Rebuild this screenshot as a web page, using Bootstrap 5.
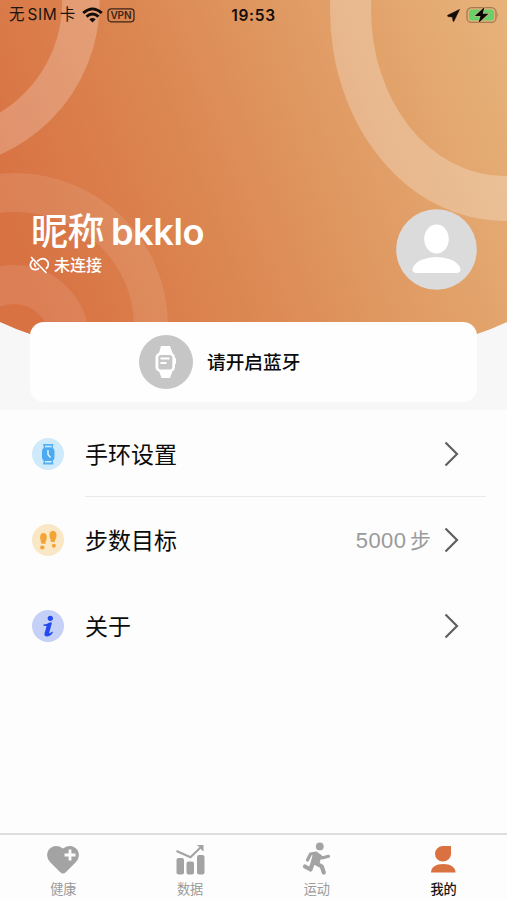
<!DOCTYPE html>
<html lang="zh-CN">
<head>
<meta charset="utf-8">
<meta name="viewport" content="width=device-width, initial-scale=1">
<title>我的</title>
<link href="https://cdn.jsdelivr.net/npm/bootstrap@5.3.0/dist/css/bootstrap.min.css" rel="stylesheet">
<style>
body{font-family:Inter,"Noto Sans CJK SC",sans-serif;background:#fdfdfd;color:#0b0b0b;line-height:1}
svg{display:block;flex:none}
.app{height:900px;overflow:hidden}
.hero{height:410px;background:#f7f7f7}
.hero-art{z-index:0}
.hero-body{z-index:1}
.status{height:30px;padding:0 8px 0 9px;display:grid;grid-template-columns:1fr auto 1fr;font-size:15px;color:#20140d}
.sim{font-size:15.5px;letter-spacing:.6px;word-spacing:-2.6px;white-space:nowrap;line-height:22px}
.clock{font-size:15.5px;font-weight:600;letter-spacing:.7px;color:#140c08;margin-right:1px;padding-top:1px}
.profile{margin-top:179px;padding:0 30px 0 31px;height:81px}
.nick{font-size:36.2px;font-weight:600;line-height:46px;letter-spacing:-.4px;word-spacing:-2px;white-space:nowrap}
.nick-zh{font-weight:500;font-size:37px}
.state{font-size:16px;font-weight:500;line-height:22px;margin-top:-1px}
.device{height:80px;margin:32px 30px 0;border-radius:14px;padding-left:109px;gap:14px;background:#fefefe}
.device-text{font-size:18.7px;font-weight:500;line-height:26px;padding-top:1px}
.item{height:86px;padding:2px 48px 0 32px;gap:21px}
.item-title{font-size:23px;line-height:32px;padding-top:1px}
.rule{height:1px;background:#e9e9e9;margin:0 21px -1px 85px}
.goal{font-size:21px;color:#9a9a9a;margin-right:-8px;line-height:30px;word-spacing:-2.5px;padding-top:1px}
.goal-num{font-family:"Liberation Sans",sans-serif;font-size:22px;letter-spacing:.5px}
.tabs{height:67px;border-top:2px solid #dedede;background:#fdfdfd}
.tab{font-size:13.2px;color:#9b9b9b;padding-top:7px}
.tab-label{line-height:19px;margin-top:4px}
.tab.active{color:#151515;font-weight:500}
</style>
<script src="https://cdn.jsdelivr.net/npm/bootstrap@5.3.0/dist/js/bootstrap.bundle.min.js"></script>
</head>
<body>
<div class="app d-flex flex-column">
  <header class="hero position-relative">
    <svg class="hero-art position-absolute top-0 start-0" width="507" height="410" viewBox="0 0 507 410">
      <defs>
        <linearGradient id="sun" gradientUnits="userSpaceOnUse" x1="20" y1="250" x2="520" y2="60">
          <stop offset="0" stop-color="#d87243"/><stop offset=".35" stop-color="#dc8752"/><stop offset=".7" stop-color="#e19f67"/><stop offset="1" stop-color="#e6b27a"/>
        </linearGradient>
        <clipPath id="dome"><path d="M0 0H507V322Q492 329 477 334Q254 410 30 334Q15 329 0 322Z"/></clipPath>
      </defs>
      <g clip-path="url(#dome)">
        <rect width="507" height="410" fill="url(#sun)"/>
        <circle cx="-68" cy="1.5" r="149" stroke-width="37.5" stroke="#fff" stroke-opacity=".22" fill="none"/>
        <path fill="#fff" fill-opacity=".25" fill-rule="evenodd" d="M330 10a174 211 0 0 0 348 0a174 211 0 0 0-348 0ZM371 10a133 166 0 0 0 266 0a133 166 0 0 0-266 0Z"/>
        <path fill="#fff" fill-opacity=".1" fill-rule="evenodd" d="M-138 326a153 153 0 0 1 306 0a153 153 0 0 1-306 0ZM-104 326a119 114 0 0 1 238 0a119 114 0 0 1-238 0Z"/>
        <circle cx="14" cy="340" r="55.500" stroke="#ecaa98" stroke-width="39" stroke-opacity=".24" fill="none"/>
      </g>
    </svg>
    <div class="hero-body position-relative">
      <div class="status align-items-center">
        <div class="d-flex align-items-center">
          <span class="sim">无 SIM 卡</span>
          <svg style="margin-left:6px" width="21" height="16" viewBox="0 0 21 16" fill="none" stroke="#140c08" stroke-width="2.800"><path d="M1.200 6Q10.500-2.200 19.800 6M4.500 9.600Q10.500 4.400 16.500 9.600"/><path d="M7.300 12.200Q10.500 9.600 13.700 12.200L10.500 15.500Z" fill="#140c08" stroke="none"/></svg>
          <svg class="ms-1" width="28" height="15" viewBox="0 0 28 15"><rect x="1" y=".8" width="26" height="13" rx="3.200" fill="none" stroke="#3b2518" stroke-width="1.300"/><text x="14" y="11" text-anchor="middle" font-size="10" font-weight="600" textLength="21" fill="#3b2518" font-family="Inter,sans-serif">VPN</text></svg>
        </div>
        <span class="clock">19:53</span>
        <div class="d-flex align-items-center justify-content-end">
          <svg width="13" height="13" viewBox="0 0 13 13"><path d="M12.500.5L.8 6.200Q0 7 1 7.500L5.500 8L6 12Q6.300 13 7 12Z" fill="#140c08" stroke="#140c08" stroke-width=".6"/></svg>
          <svg style="margin-left:6px" width="33" height="18" viewBox="0 0 33 18"><rect x="1" y="1.600" width="29" height="14.800" rx="4.500" fill="none" stroke="#a67b50" stroke-width="1.300"/><rect x="3" y="3.600" width="25" height="10.800" rx="2.800" fill="#69cf6b"/><path d="M31.300 6.500Q33 9 31.300 11.500Z" fill="#a67b50"/><path d="M18.500 1L8.800 10H14.500L12.500 17L22.500 7.800H16.700Z" fill="#080808" stroke="#e2ae76" stroke-width="1.200" paint-order="stroke"/></svg>
        </div>
      </div>
      <div class="profile d-flex justify-content-between text-white">
        <div>
          <div class="nick"><span class="nick-zh">昵称</span> bkklo</div>
          <div class="state d-flex align-items-center">
            <svg style="margin:0 4px 0 -2px" width="21" height="18" viewBox="0 0 21 18" fill="none" stroke="#fff" stroke-width="1.700" stroke-linecap="round"><path d="M2.500 1.500L17 16.500M3.500 4.300Q-.5 8.500 2.800 12.500Q6.500 15 9.500 12.500M8.800 5L11 3.400Q15 1.500 18.200 4.800Q20.800 9 17.500 12.300M5.500 7.500Q5.500 9.200 6.500 10.500"/></svg>未连接
          </div>
        </div>
        <svg width="81" height="81" viewBox="0 0 81 81"><circle cx="40.500" cy="40.500" r="40.300" fill="#dbdbdb"/><ellipse cx="40.500" cy="30" rx="12.300" ry="14.400" fill="#fff"/><path d="M16.500 60.500Q17 55 25 51Q40.500 45 56 51Q64 55 64.500 60.500Q64.500 64 60 64H21Q16.500 64 16.500 60.500Z" fill="#fff"/></svg>
      </div>
      <div class="device d-flex align-items-center">
        <svg width="54" height="54" viewBox="0 0 54 54"><circle cx="27" cy="27" r="27" fill="#c6c6c6"/><path d="M22 11H31L33.500 18V36L31 43H22.500L20 36V18Z" fill="#fff"/><rect x="16.500" y="17.500" width="19.500" height="19.500" rx="5" fill="#fff"/><rect x="35" y="23" width="2" height="6" rx=".8" fill="#fff"/><rect x="19.300" y="20" width="14" height="14.500" rx="2.800" fill="#c6c6c6"/><path d="M21.500 23.500H30.500M21.500 28H27.500" stroke="#fff" stroke-width="2"/></svg>
        <span class="device-text">请开启蓝牙</span>
      </div>
    </div>
  </header>
  <main class="flex-grow-1">
    <div class="item d-flex align-items-center">
      <svg width="32" height="32" viewBox="0 0 32 32"><circle cx="16" cy="16" r="16" fill="#cfeafb"/><path d="M11 6H21.500L20.500 11H12ZM12 21H20.500L21.500 26.500H11Z" fill="#54b1f3"/><path d="M13 7.700H19.500V9.500H13ZM13 23H19.500V24.500H13Z" fill="#d5effc"/><rect x="10" y="9.500" width="12.500" height="13.500" rx="4" fill="#4daaf1"/><path d="M16 12V16.500L18.500 19.500" fill="none" stroke="#def3fd" stroke-width="1.500"/></svg>
      <span class="item-title flex-grow-1">手环设置</span>
      <svg width="15" height="26" viewBox="0 0 15 26" fill="none" stroke="#606060" stroke-width="2.200"><path d="M1.500 1.500L13 13L1.500 24.500"/></svg>
    </div>
    <div class="rule"></div>
    <div class="item d-flex align-items-center">
      <svg width="32" height="32" viewBox="0 0 32 32"><circle cx="16" cy="16" r="16" fill="#f9e7c6"/><g fill="#f2a534"><path d="M9.500 9.500C12 8 15 9.500 14.800 13C14.800 16 13.500 17 13.300 20L9.200 19.500C9.500 17 6.500 13 9.500 9.500Z"/><ellipse cx="10.300" cy="23.500" rx="2.200" ry="1.900"/><path d="M19 7.500C22 6 25 8 24.500 12C24.300 15 22.500 16 22.800 18L19 18C18.800 15 17.500 14 17.500 11.500C17.500 9.500 17.800 8.200 19 7.500Z"/><ellipse cx="21.800" cy="21.700" rx="2" ry="2"/></g></svg>
      <span class="item-title flex-grow-1">步数目标</span>
      <span class="goal"><span class="goal-num">5000</span> 步</span>
      <svg width="15" height="26" viewBox="0 0 15 26" fill="none" stroke="#606060" stroke-width="2.200"><path d="M1.500 1.500L13 13L1.500 24.500"/></svg>
    </div>
    <div class="item d-flex align-items-center">
      <svg width="32" height="32" viewBox="0 0 32 32"><circle cx="16" cy="16" r="16" fill="#c5d0f7"/><circle cx="18.300" cy="8.300" r="2.600" fill="#2449ee"/><path d="M11.500 14.500Q15 14.500 17.500 12.500H20L17.300 22.500Q17 24.500 20.500 21.500L21 22.200Q18.500 26.500 14.500 26.500Q11.800 26 12.600 23L14.600 16.200Q14.500 15.500 11.300 15.700Z" fill="#2449ee"/></svg>
      <span class="item-title flex-grow-1">关于</span>
      <svg width="15" height="26" viewBox="0 0 15 26" fill="none" stroke="#606060" stroke-width="2.200"><path d="M1.500 1.500L13 13L1.500 24.500"/></svg>
    </div>
  </main>
  <nav class="tabs row g-0 text-center">
    <div class="tab col d-flex flex-column align-items-center">
      <svg width="34" height="34" viewBox="0 0 34 34"><path d="M17 31.500Q15.500 31.500 14 30L4 20Q-1 14 2.500 8Q8.500 1 17 6.500Q25.500 1 31.500 8Q35 14 30 20L20 30Q18.500 31.500 17 31.500Z" fill="#a3a3a3"/><path d="M24 7.500V18.500M18.500 13H29.500" stroke="#fdfdfd" stroke-width="2.800"/></svg>
      <span class="tab-label">健康</span>
    </div>
    <div class="tab col d-flex flex-column align-items-center">
      <svg width="34" height="34" viewBox="0 0 34 34" fill="#a3a3a3"><rect x="3.500" y="16" width="7.500" height="16.500" rx="2"/><rect x="13.500" y="19.500" width="7.500" height="13" rx="2"/><rect x="24" y="13" width="7.500" height="19.500" rx="2"/><path d="M3.500 9L17.500 15.300L28.500 4.500" fill="none" stroke="#a3a3a3" stroke-width="2.100"/><path d="M23.500 3H30.500V9.500L28 7.500L27.500 5.500Z"/></svg>
      <span class="tab-label">数据</span>
    </div>
    <div class="tab col d-flex flex-column align-items-center">
      <svg width="34" height="34" viewBox="0 0 34 34" fill="none" stroke="#a3a3a3" stroke-width="3.200" stroke-linecap="round" stroke-linejoin="round"><circle cx="19.800" cy="4.400" r="3.900" fill="#a3a3a3" stroke="none"/><path d="M7.500 18L10.500 12L16 11L22 16L28.500 14.300"/><path d="M14.500 12L20 14L17.500 22.500L12.500 20Z" fill="#a3a3a3"/><path d="M13 20L10.500 27.500L5 24.500M16 21L21.800 24.500L23.800 30.500" stroke-width="4.200"/></svg>
      <span class="tab-label">运动</span>
    </div>
    <div class="tab active col d-flex flex-column align-items-center">
      <svg width="34" height="34" viewBox="0 0 34 34" fill="#da7140"><path d="M24 4V12.200A8 7.800 0 1 1 16 4Z"/><path d="M4 30.500C4 25 9 22 16.200 22S28.500 25 28.500 30.500Z"/></svg>
      <span class="tab-label">我的</span>
    </div>
  </nav>
</div>
</body>
</html>
